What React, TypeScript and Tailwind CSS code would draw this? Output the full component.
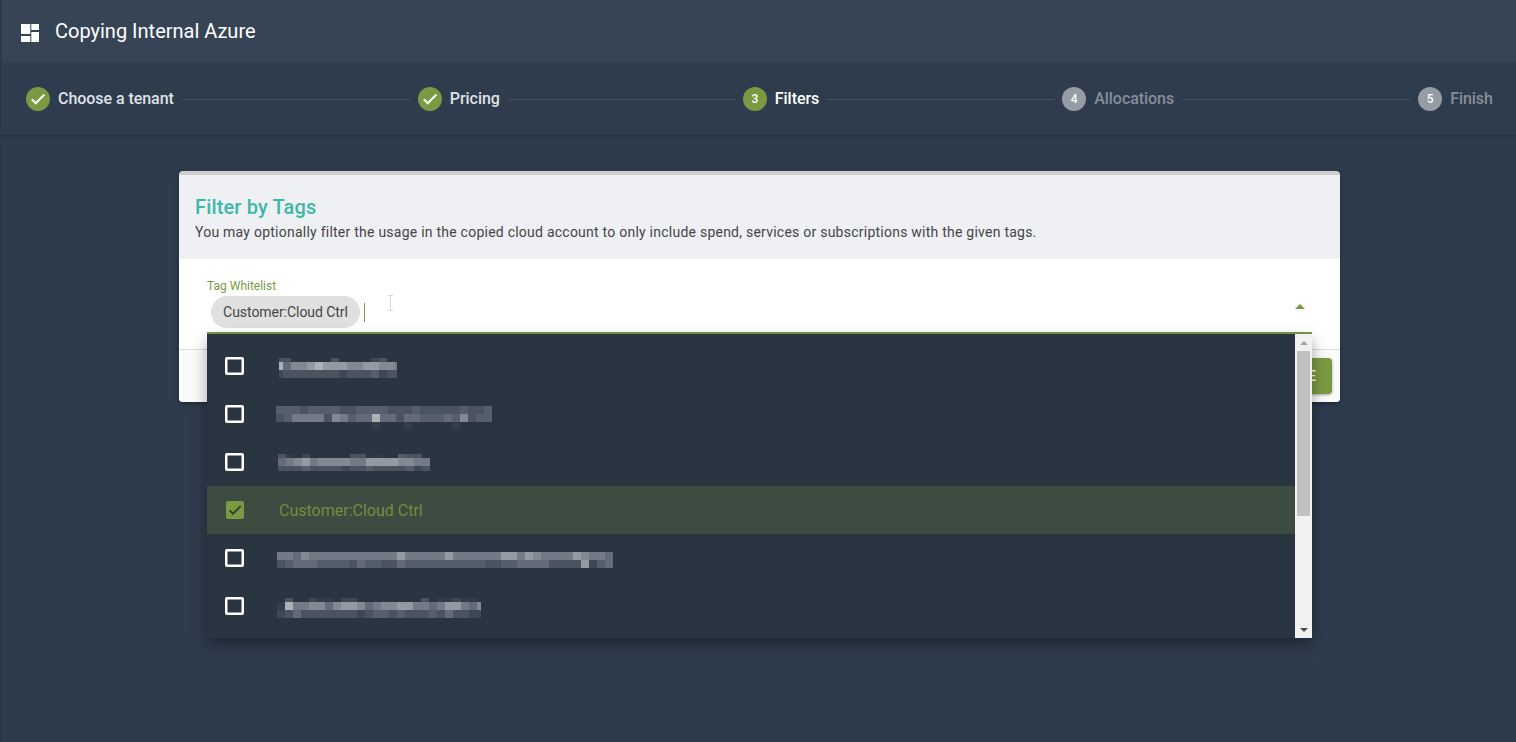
import React from "react";

const COLS: Record<string, string> = {
  "0": "transparent", "1": "#323d4a", "2": "#3d4855", "3": "#4a5360", "4": "#555e6b", "5": "#626b77",
  "6": "#727a86", "7": "#828993", "8": "#949aa2", "9": "#adb1b6",
};

type Band = { h: number; cells: string };

function Mosaic({ width, bands, offset = 0, className }: { width: number; bands: Band[]; offset?: number; className: string }) {
  let y = 0;
  const height = bands.reduce((a, b) => a + b.h, 0);
  return (
    <svg width={width} height={height} className={className}>
      {bands.map((b, i) => {
        const top = y;
        y += b.h;
        return b.cells.split("").map((c, j) => (
          <rect key={`${i}-${j}`} x={j * 8 - offset} y={top} width={8} height={b.h} fill={COLS[c]} />
        ));
      })}
    </svg>
  );
}

function CheckIcon({ className }: { className: string }) {
  return (
    <svg viewBox="0 0 24 24" className={className} fill="currentColor" stroke="currentColor" strokeWidth="1">
      <path d="M9 16.2 4.8 12l-1.4 1.4L9 19 21 7l-1.4-1.4z" />
    </svg>
  );
}

function Step({ n, label, state }: { n: number; label: string; state: "done" | "active" | "todo" }) {
  return (
    <div className="flex items-center shrink-0 gap-2">
      <div
        className={
          state === "todo"
            ? "w-6 h-6 rounded-full bg-[#959ca5] flex items-center justify-center text-white text-xs font-medium"
            : "w-6 h-6 rounded-full bg-[#7a9a41] flex items-center justify-center text-white text-xs font-medium"
        }
      >
        {state === "done" ? <CheckIcon className="w-[18px] h-[18px] text-white" /> : n}
      </div>
      <span
        className={
          state === "done"
            ? "text-base font-medium tracking-[-0.05px] text-[#dfe2e6]"
            : state === "active"
            ? "text-base font-medium tracking-[-0.05px] text-white"
            : "text-base font-medium tracking-[-0.05px] text-[#868e99]"
        }
      >
        {label}
      </span>
    </div>
  );
}

function Box() {
  return <div className="w-[19px] h-[18px] border-2 border-white rounded-[2px] shrink-0 shadow-[inset_0_0_0_0.5px_#ffffff]" />;
}

function Row({ children }: { children: React.ReactNode }) {
  return (
    <div className="h-12 flex items-center pl-[18px] relative">
      <Box />
      {children}
    </div>
  );
}

export default function App() {
  return (
    <div className="w-[1516px] h-[742px] overflow-hidden bg-[#2e3b4d] border-l-2 border-[#2c3849] font-['Roboto',sans-serif]">
      <header className="h-[63px] bg-[#374455] flex items-center pl-[19px]">
        <svg viewBox="0 0 18 18" className="w-[18px] h-[18px] mt-0.5" fill="#fff">
          <rect x="0" y="0" width="9.3" height="10" />
          <rect x="0" y="12" width="9.3" height="6" />
          <rect x="10.3" y="0" width="7.7" height="6" />
          <rect x="10.3" y="8" width="7.7" height="10" />
        </svg>
        <h1 className="ml-4 mb-[2px] text-xl font-normal text-white">Copying Internal Azure</h1>
      </header>

      <nav className="h-[73px] bg-[#2f3c4e] border-b border-[#263140] shadow-[0_1px_3px_rgba(0,0,0,0.15)] flex items-center pl-6">
        <Step n={1} label="Choose a tenant" state="done" />
        <div className="w-[228px] h-px bg-[#465264] mx-2 mt-px shrink-0" />
        <Step n={2} label="Pricing" state="done" />
        <div className="w-[227px] h-px bg-[#465264] mx-2 mt-px shrink-0" />
        <Step n={3} label="Filters" state="active" />
        <div className="w-[227px] h-px bg-[#465264] mx-2 mt-px shrink-0" />
        <Step n={4} label="Allocations" state="todo" />
        <div className="w-[228px] h-px bg-[#465264] mx-2 mt-px shrink-0" />
        <Step n={5} label="Finish" state="todo" />
      </nav>

      <section className="ml-[177px] mt-[35px] w-[1161px] rounded border-t-4 border-[#cfcfcf] bg-white shadow-[0_2px_4px_rgba(0,0,0,0.3)]">
        <div className="h-[84px] bg-[#eff0f4] pl-4 pt-5">
          <h2 className="text-xl font-medium leading-6 tracking-[0.15px] text-[#3db8a8]">Filter by Tags</h2>
          <p className="mt-[3px] text-sm leading-5 tracking-[0.24px] text-[#454545]">
            You may optionally filter the usage in the copied cloud account to only include spend, services or subscriptions with the given tags.
          </p>
        </div>

        <div className="h-[91px] pt-5 pl-7 pr-7 border-b border-[#dddddd]">
          <div className="relative h-[55px] border-b-2 border-[#7a9a41]">
            <div className="text-xs leading-[14px] text-[#7a9a41]">Tag Whitelist</div>
            <div className="flex items-center mt-[3px] ml-1">
              <div className="w-[149px] h-8 pb-px rounded-full bg-[#e0e0e0] flex items-center justify-center text-sm tracking-[-0.05px] text-[#454545]">Customer:Cloud Ctrl</div>
              <div className="ml-1 w-px h-[19px] bg-[#7a9a41]" />
              <svg width="7" height="16" viewBox="0 0 7 16" className="ml-[22px] -mt-[19px]" stroke="#d8d8d8" fill="none">
                <path d="M1 .5h5M1 15.5h5M3.5 .5v15" />
              </svg>
            </div>
            <div className="absolute right-[7px] top-[25px] w-0 h-0 border-l-[5px] border-r-[5px] border-b-[5px] border-l-transparent border-r-transparent border-b-[#7a9a41]" />

            <div className="absolute left-0 right-0 top-full mt-[2px] h-[304px] bg-[#2a3542] shadow-[0_6px_14px_rgba(0,0,0,0.35)] flex z-10">
              <div className="flex-1 pt-2">
                <Row>
                  <Mosaic
                    className="ml-[35px] mt-1"
                    width={118}
                    offset={4}
                    bands={[
                      { h: 4, cells: "3300000300002300" },
                      { h: 8, cells: "9577898887788776" },
                      { h: 8, cells: "2333333323334233" },
                    ]}
                  />
                </Row>
                <Row>
                  <Mosaic
                    className="ml-8 mt-2"
                    width={216}
                    bands={[
                      { h: 8, cells: "444344443344443334333334334" },
                      { h: 8, cells: "346666376455955355444547344" },
                      { h: 8, cells: "000000000000100010000010000" },
                    ]}
                  />
                </Row>
                <Row>
                  <Mosaic
                    className="ml-[34px] mt-px"
                    width={152}
                    bands={[
                      { h: 4, cells: "3102000003301004330" },
                      { h: 8, cells: "5678677776688887766" },
                      { h: 5, cells: "3334333323343333423" },
                    ]}
                  />
                </Row>
                <div className="h-12 flex items-center pl-[19px] bg-[#3d4c41]">
                  <div className="w-[18px] h-[18px] rounded-[2px] bg-[#7a9a41] flex items-center justify-center">
                    <CheckIcon className="w-4 h-4 text-[#2f3b35]" />
                  </div>
                  <span className="ml-[35px] mt-0.5 text-base text-[#6f8f3e]">Customer:Cloud Ctrl</span>
                </div>
                <Row>
                  <Mosaic
                    className="ml-[33px] mt-1"
                    width={336}
                    bands={[
                      { h: 8, cells: "665766666666666866666866666688687666687665856" },
                      { h: 8, cells: "345554444354433544444444443344555533338245344" },
                    ]}
                  />
                </Row>
                <Row>
                  <Mosaic
                    className="ml-[33px] mt-1"
                    width={204}
                    bands={[
                      { h: 4, cells: "03002110220000000030112110" },
                      { h: 8, cells: "19667757887567788665688657" },
                      { h: 8, cells: "23533333332344343334353322" },
                    ]}
                  />
                </Row>
              </div>
              <div className="w-[17px] bg-[#f1f1f1] flex flex-col items-center">
                <div className="h-[17px] flex items-center justify-center">
                  <div className="w-0 h-0 border-l-4 border-r-4 border-b-4 border-l-transparent border-r-transparent border-b-[#a3a3a3]" />
                </div>
                <div className="w-[13px] h-[165px] bg-[#c1c1c1]" />
                <div className="flex-1" />
                <div className="h-[17px] flex items-center justify-center">
                  <div className="w-0 h-0 border-l-4 border-r-4 border-t-4 border-l-transparent border-r-transparent border-t-[#505050]" />
                </div>
              </div>
            </div>
          </div>
        </div>

        <div className="h-[52px] bg-[#fbfbfb] rounded-b flex items-center justify-end pr-2">
          <button className="h-9 px-4 rounded bg-[#7a9a41] text-sm font-medium text-white shadow-[0_1px_3px_rgba(0,0,0,0.35)]">CONTINUE</button>
        </div>
      </section>
    </div>
  );
}
